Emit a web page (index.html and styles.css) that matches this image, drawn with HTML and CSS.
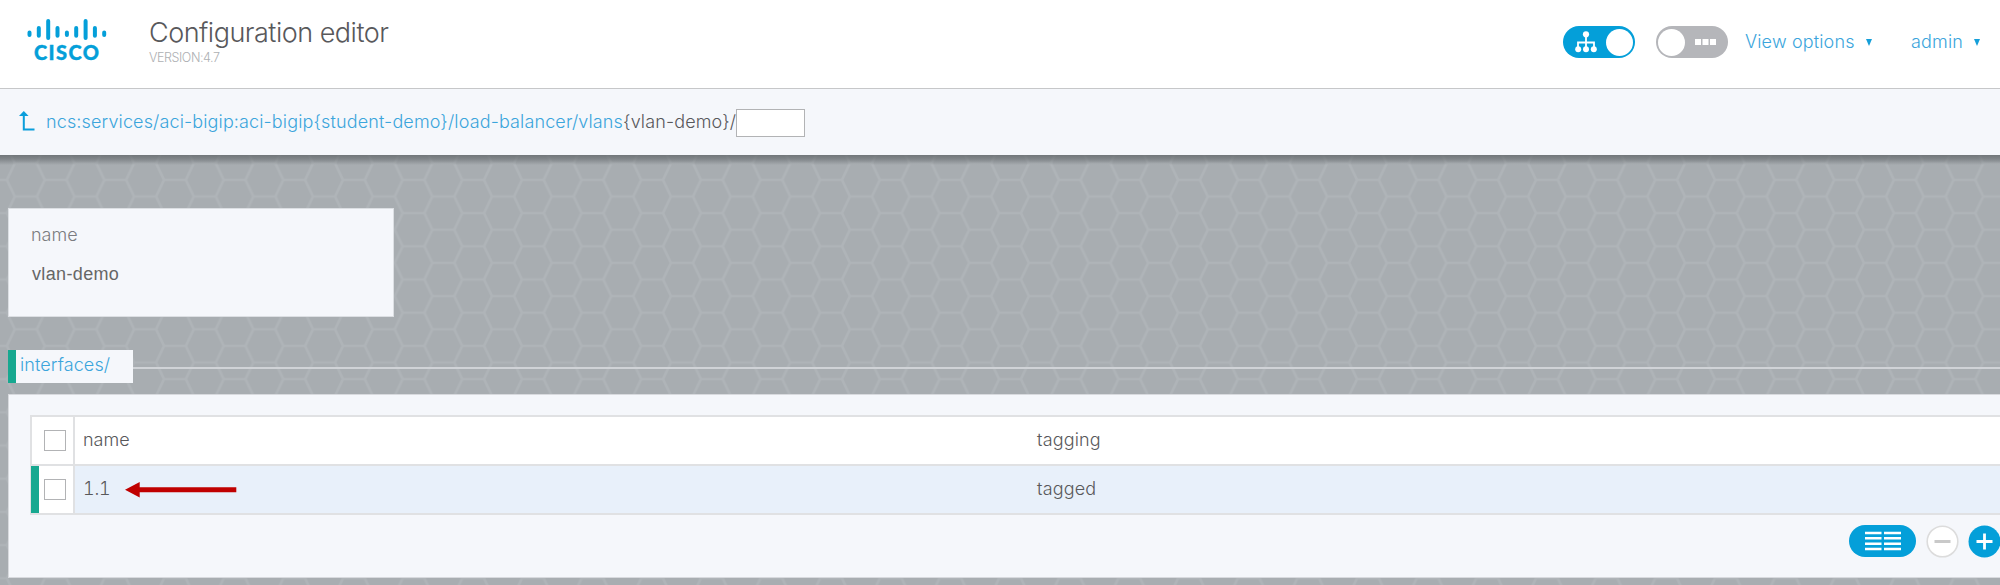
FILE: index.html
```html
<!DOCTYPE html>
<html lang="en">
<head>
<meta charset="utf-8">
<title>Configuration editor</title>
<link rel="stylesheet" href="styles.css">
</head>
<body>
<header class="header">
  <svg class="logo" width="80" height="46" viewBox="0 0 80 46">
    <g class="logo-bars">
      <path d="M2.5 14.500v2.600M11.800 10v7.700M21.200 3v17M30.500 10v7.700M39.900 14.500v2.600M49.200 10v7.700M58.600 3v17M67.900 10v7.700M77.200 14.500v2.600"/>
    </g>
    <text class="logo-text" x="7" y="42" textLength="65">CISCO</text>
  </svg>
  <div class="titles">
    <h1 class="title">Configuration editor</h1>
    <div class="version">VERSION:4.7</div>
  </div>
  <div class="controls">
    <div class="toggle toggle-on">
      <svg width="22" height="22" viewBox="0 0 22 22">
        <path d="M11 4v14M3 18v-6.500h16V18" fill="none" stroke="#fff" stroke-width="1.800"/>
        <g fill="#fff"><circle cx="11" cy="3.300" r="3.100"/><circle cx="3.200" cy="18.200" r="3"/><circle cx="11" cy="18.200" r="3"/><circle cx="18.800" cy="18.200" r="3"/></g>
      </svg>
      <span class="knob"></span>
    </div>
    <div class="toggle toggle-off">
      <span class="knob"></span>
      <svg width="21" height="6" viewBox="0 0 21 6"><g fill="#fff"><rect width="6" height="6"/><rect x="7.500" width="6" height="6"/><rect x="15" width="6" height="6"/></g></svg>
    </div>
    <a class="menu menu-view"><span>View options</span><i class="caret"></i></a>
    <a class="menu menu-admin"><span>admin</span><i class="caret"></i></a>
  </div>
</header>
<nav class="path">
  <svg class="up" width="16" height="21" viewBox="0 0 16 21"><path d="M4.800 3v15.500H15.500" fill="none" stroke="#0a9edb" stroke-width="2"/><path d="M4.800 0L9.600 5H0z" fill="#0a9edb"/></svg>
  <span class="crumb"><a class="link">ncs:services/aci-bigip:aci-bigip{student-demo}/load-balancer/vlans</a>{vlan-demo}/</span>
  <input class="path-input" type="text" aria-label="Path">
</nav>
<main class="canvas">
  <svg class="hexes" width="100%" height="100%">
    <defs>
      <pattern id="hex" width="59.650" height="33.200" patternUnits="userSpaceOnUse" patternTransform="translate(25.800 8.300)">
        <path d="M-11 0H11L18.900 16.600L11 33.200H-11M70.650 0H48.650L40.750 16.600L48.650 33.200H70.650M18.900 16.600H40.750" fill="none" stroke="#afb4b8" stroke-width="2.600"/>
      </pattern>
    </defs>
    <rect width="100%" height="100%" fill="url(#hex)"/>
  </svg>
  <section class="card">
    <div class="label">name</div>
    <div class="value">vlan-demo</div>
  </section>
  <div class="section-head"><a class="tag"><span>interfaces/</span></a><span class="rule"></span></div>
  <section class="panel">
    <div class="table">
      <div class="row">
        <div class="cell check"><span class="box"></span></div>
        <div class="cell name"><span>name</span></div>
        <div class="cell tagging"><span>tagging</span></div>
      </div>
      <div class="row selected">
        <div class="cell check"><span class="box"></span></div>
        <div class="cell name"><span class="num">1.1</span>
          <svg class="arrow" width="112" height="16" viewBox="0 0 112 16"><path d="M0 7.700L14.700 0V5.200H111.300V10.200H14.700V15.400z" fill="#c00000"/></svg>
        </div>
        <div class="cell tagging"><span>tagged</span></div>
      </div>
    </div>
    <div class="actions">
      <div class="pill"><svg width="36" height="20" viewBox="0 0 36 20"><path d="M0 2h16.500M19 2h17M0 7.300h16.500M19 7.300h17M0 12.700h16.500M19 12.700h17M0 18h16.500M19 18h17" stroke="#fff" stroke-width="2.500"/></svg></div>
      <svg class="minus" width="33" height="33" viewBox="0 0 33 33"><circle cx="16.500" cy="16.500" r="15.300" fill="#fff" stroke="#dcdcdc" stroke-width="1.600"/><path d="M8.500 16.500h16" stroke="#c9c9c9" stroke-width="3"/></svg>
      <svg class="plus" width="33" height="33" viewBox="0 0 33 33"><circle cx="16.500" cy="16.500" r="16" fill="#049fd9"/><path d="M8.500 16.500h16M16.500 8.500v16" stroke="#fff" stroke-width="2.800"/></svg>
    </div>
  </section>
</main>
</body>
</html>
```
FILE: styles.css
```css
* { box-sizing: border-box; }
body {
  margin: 0;
  width: 2000px;
  height: 585px;
  overflow: hidden;
  display: flex;
  flex-direction: column;
  font-family: Inter, "Liberation Sans", sans-serif;
  font-weight: 300;
  font-size: 18px;
  line-height: 24px;
  color: #58585b;
  white-space: nowrap;
}
.header {
  height: 89px;
  flex: none;
  display: flex;
  align-items: flex-start;
  background: #fff;
  border-bottom: 1px solid #c6c7c9;
}
.logo { margin: 18px 0 0 27px; flex: none; }
.logo-bars { fill: none; stroke: #049fd9; stroke-width: 4; stroke-linecap: round; }
.logo-text { font: 900 20px Lato, sans-serif; fill: #049fd9; stroke: #049fd9; stroke-width: 0.4; }
.titles { margin: 15px 0 0 42px; }
.title { margin: 0; font-size: 27px; font-weight: 300; line-height: 36px; letter-spacing: -0.500px; }
.version { font-size: 12.500px; line-height: 14px; color: #aeb0b3; letter-spacing: -0.420px; }
.controls { margin-left: auto; display: flex; align-items: center; height: 84px; }
.toggle { width: 72px; height: 32px; border-radius: 16px; display: flex; align-items: center; }
.toggle-on { background: #049fd9; padding-left: 12px; gap: 9px; }
.toggle-off { background: #b5b6ba; margin-left: 21px; padding-left: 2px; gap: 10px; }
.knob { width: 27px; height: 27px; border-radius: 50%; background: #fff; }
.menu { display: flex; align-items: center; justify-content: space-between; color: #3ba5dc; letter-spacing: 0.150px; }
.menu-view { width: 127px; margin-left: 17px; }
.menu-admin { width: 69px; margin: 0 20px 0 39px; }
.caret { border: 3.500px solid transparent; border-top: 7px solid #159fd9; border-bottom: 0; }
.path {
  height: 66px;
  flex: none;
  display: flex;
  align-items: center;
  background: #f5f7fb;
  padding-left: 19px;
}
.up { margin-right: 11px; margin-top: -2px; }
.crumb { letter-spacing: 0.130px; }
.link { color: #3ba5dc; }
.path-input { width: 69px; height: 28px; border: 1px solid #b2b3b5; background: #fff; padding: 0; margin-top: 2px; }
.canvas {
  flex: 1;
  position: relative;
  isolation: isolate;
  padding: 53px 0 0 8px;
  background: #a8adb1;
}
.canvas::before {
  content: "";
  position: absolute;
  inset: 0 0 auto 0;
  height: 10px;
  z-index: -1;
  background: linear-gradient(rgba(90, 95, 98, 0.700), rgba(90, 95, 98, 0.500) 40%, rgba(90, 95, 98, 0));
}
.hexes { position: absolute; inset: 0; z-index: -2; }
.card {
  width: 386px;
  height: 109px;
  background: #f5f7fb;
  border: 1px solid #dcdfe3;
  padding: 14px 0 0 22px;
}
.label { color: #7b7c80; }
.value { font: 400 18px/24px "Liberation Sans", sans-serif; letter-spacing: 0.350px; margin: 15px 0 0 1px; color: #666; }
.section-head { display: flex; align-items: center; margin-top: 33px; height: 33px; }
.tag { width: 125px; height: 33px; background: #f5f7fb; border-left: 8px solid #17a890; padding: 3px 0 0 4px; color: #3ba5dc; letter-spacing: 0.100px; }
.rule { flex: 1; height: 2px; background: #d0d3d7; margin-top: 2px; }
.panel { margin-top: 11px; height: 184px; background: #f5f7fb; border: 1px solid #d8dade; border-right: 0; padding: 20px 0 0 21px; }
.table { border: 2px solid #e0e1e3; border-width: 2px 0 0 2px; }
.row { display: grid; grid-template-columns: 43px 953px 1fr; height: 49px; border-bottom: 2px solid #e0e1e3; background: #fff; }
.cell { display: flex; align-items: center; }
.cell > span:not(.box) { margin-top: -2px; }
.check { border-right: 2px solid #e0e1e3; padding-left: 12px; background: #fff; }
.name { padding-left: 8px; }
.tagging { padding-left: 9px; letter-spacing: 0.150px; }
.selected { background: #e8f0fa; }
.selected .check { border-left: 8px solid #17a890; margin-left: -1px; padding-left: 5px; }
.box { width: 22px; height: 21px; border: 1px solid #b2b3b5; background: #fff; }
.num { width: 27px; font-variant-numeric: tabular-nums; letter-spacing: -0.200px; }
.arrow { margin-left: 15px; }
.actions { display: flex; justify-content: flex-end; margin-top: 10px; margin-right: -1px; height: 33px; }
.pill { width: 67px; height: 32px; border-radius: 16px; background: #049fd9; display: flex; align-items: center; justify-content: center; margin-right: 10px; }
.minus { margin-right: 9px; }
```
